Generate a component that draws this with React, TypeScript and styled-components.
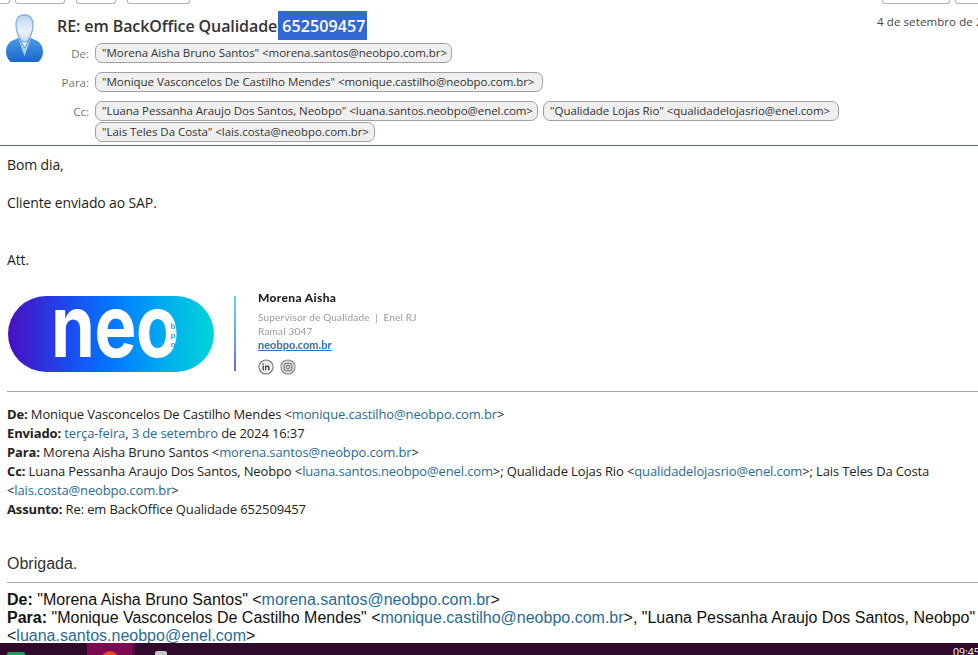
import React from "react";
import styled, { createGlobalStyle } from "styled-components";

const GlobalStyle = createGlobalStyle`
  html, body {
    margin: 0;
    padding: 0;
    background: #ffffff;
    overflow: hidden;
  }
`;

const Page = styled.div`
  width: 978px;
  height: 655px;
  display: flex;
  flex-direction: column;
  overflow: hidden;
  font-family: "Open Sans", "Noto Sans", sans-serif;
  color: #222;
`;

const Toolbar = styled.div`
  height: 4px;
  display: flex;
  justify-content: space-between;
  flex: none;
`;

const ToolGroup = styled.div<{ $left?: number; $right?: number }>`
  display: flex;
  margin-left: ${(p) => p.$left ?? 0}px;
  margin-right: ${(p) => p.$right ?? 0}px;
`;

const ToolButton = styled.div<{ $w: number; $gap: number }>`
  width: ${(p) => p.$w}px;
  margin-right: ${(p) => p.$gap}px;
  height: 4px;
  box-sizing: border-box;
  border: 1px solid #b5b5b5;
  border-top: none;
  border-radius: 0 0 3px 3px;
`;

const Header = styled.div`
  height: 142px;
  box-sizing: border-box;
  border-bottom: 1px solid #5f6f7d;
  display: flex;
  flex: none;
  position: relative;
`;

const AvatarCol = styled.div`
  width: 53px;
  flex: none;
  padding: 10px 0 0 5px;
  box-sizing: border-box;
`;

const HeaderMain = styled.div`
  flex: 1;
  display: flex;
  flex-direction: column;
`;

const Subject = styled.div`
  height: 32px;
  display: flex;
  align-items: flex-start;
  font-size: 16px;
  font-weight: 600;
  color: #333;
  letter-spacing: -0.09px;
  line-height: 31px;
  margin: 7px 0 0 4px;
  white-space: pre;
`;

const Selected = styled.span`
  background: #3367d1;
  color: #fff;
  padding-left: 4px;
  width: 89px;
  height: 29px;
  margin-left: 1px;
  box-sizing: border-box;
  letter-spacing: 0.1px;
  overflow: hidden;
`;

const DateText = styled.div`
  position: absolute;
  left: 877px;
  top: 10px;
  font-size: 11.5px;
  letter-spacing: 0.1px;
  line-height: 16px;
  color: #444;
  white-space: nowrap;
`;

const Row = styled.div<{ $mb: number }>`
  display: flex;
  margin-bottom: ${(p) => p.$mb}px;
`;

const RowLabel = styled.div`
  width: 36px;
  flex: none;
  text-align: right;
  font-size: 11.5px;
  line-height: 21px;
  color: #777;
  margin-right: 6px;
`;

const Chips = styled.div`
  display: flex;
  flex-wrap: wrap;
  gap: 1px 5px;
  width: 800px;
`;

const Chip = styled.div<{ $w: number }>`
  width: ${(p) => p.$w}px;
  height: 20px;
  box-sizing: border-box;
  border: 1px solid #a0a0a0;
  border-radius: 7px;
  background: #efefef;
  font-size: 11.5px;
  line-height: 18px;
  padding-left: 6px;
  color: #333;
  white-space: nowrap;
  overflow: hidden;
  letter-spacing: -0.05px;
`;

const Body = styled.div`
  flex: 1;
  padding: 0 0 0 7px;
  overflow: hidden;
`;

const Para = styled.p<{ $top: number }>`
  margin: ${(p) => p.$top}px 0 0;
  font-size: 14px;
  line-height: 19px;
  color: #1d1d1d;
  letter-spacing: -0.13px;
`;

const Signature = styled.div`
  display: flex;
  margin: 27px 0 0 1px;
  height: 80px;
  align-items: flex-start;
`;

const Logo = styled.div`
  width: 206px;
  height: 76px;
  border-radius: 38px;
  background: linear-gradient(90deg, #4a0fc0 0%, #1a4cf0 30%, #0080ff 55%, #00b0ec 78%, #00d4d8 100%);
  flex: none;
  position: relative;
  filter: blur(0.4px);
`;

const LogoWord = styled.span`
  display: block;
  width: 155px;
  font-family: "Inter", sans-serif;
  font-size: 86px;
  font-weight: 700;
  line-height: 60px;
  color: #fff;
  letter-spacing: -0.5px;
  transform: scaleX(0.82);
  transform-origin: 0 50%;
  padding: 0 0 0 0;
  position: absolute;
  left: 43px;
  top: 0;
`;

const LogoSub = styled.span`
  position: absolute;
  left: 161px;
  top: 25px;
  writing-mode: vertical-rl;
  text-orientation: upright;
  font-family: "Lato", sans-serif;
  font-size: 8px;
  line-height: 8px;
  letter-spacing: -1px;
  color: #1a9cee;
  font-weight: 700;
`;

const SigDivider = styled.div`
  width: 2px;
  height: 75px;
  margin-left: 20px;
  background: linear-gradient(180deg, #5fdce6 0%, #5fa8f0 55%, #7a5fe0 100%);
  flex: none;
`;

const SigText = styled.div`
  margin-left: 22px;
  font-family: "Lato", sans-serif;
  filter: blur(0.4px);
`;

const SigName = styled.div`
  font-size: 12px;
  font-weight: 900;
  line-height: 12px;
  letter-spacing: 0.35px;
  color: #222;
  margin-top: -4px;
`;

const SigLine = styled.div<{ $top?: number }>`
  font-size: 10px;
  letter-spacing: 0.2px;
  line-height: 14px;
  color: #9a9a9a;
  white-space: pre;
  margin-top: ${(p) => p.$top ?? 0}px;
`;

const SigLink = styled.div`
  font-size: 11px;
  font-weight: 700;
  line-height: 12px;
  color: #2f6fc0;
  text-decoration: underline;
  margin-top: 1px;
`;

const SigIcons = styled.div`
  display: flex;
  gap: 6px;
  margin-top: 8px;
`;

const Rule = styled.hr<{ $top: number }>`
  border: none;
  height: 1px;
  background: #a9a9a9;
  margin: ${(p) => p.$top}px 0 0;
`;

const Meta = styled.div`
  margin-top: 13px;
  font-size: 13px;
  line-height: 19px;
  color: #222;
  letter-spacing: -0.13px;
  width: 945px;
`;

const Link = styled.span`
  color: #2a6a96;
`;

const Bold = styled.b`
  font-weight: 700;
`;

const Thanks = styled.div`
  margin-top: 36px;
  font-family: "Liberation Sans", Arial, sans-serif;
  font-size: 16px;
  line-height: 18px;
  color: #333;
`;

const Quoted = styled.div`
  margin-top: 8px;
  font-family: "Liberation Sans", Arial, sans-serif;
  font-size: 16px;
  line-height: 18px;
  color: #111;
  white-space: nowrap;
`;

const Taskbar = styled.div`
  height: 12px;
  flex: none;
  background: #2f0a2b;
  display: flex;
  align-items: flex-end;
  position: relative;
  overflow: hidden;
`;

const TaskIcon = styled.div<{ $left: number; $w: number; $h: number; $color: string }>`
  margin-left: ${(p) => p.$left}px;
  width: ${(p) => p.$w}px;
  height: ${(p) => p.$h}px;
  background: ${(p) => p.$color};
  border-radius: 2px 2px 0 0;
  flex: none;
`;

const ActiveTile = styled.div`
  margin-left: 62px;
  width: 45px;
  height: 12px;
  flex: none;
  background: #7d0a52;
  border-right: 3px solid #5e0a45;
  display: flex;
  justify-content: center;
  overflow: hidden;
`;

const TileDot = styled.div`
  width: 18px;
  height: 18px;
  margin-top: 8px;
  border-radius: 50%;
  background: #e8452f;
  flex: none;
`;

const Clock = styled.div`
  position: absolute;
  left: 953px;
  top: 3px;
  font-family: "Open Sans", sans-serif;
  font-size: 10.5px;
  line-height: 12px;
  color: #fff;
`;

const Avatar = () => (
  <svg width="39" height="49" viewBox="0 0 39 49">
    <defs>
      <linearGradient id="head" x1="0" y1="0" x2="0" y2="1">
        <stop offset="0" stopColor="#bcd5ee" />
        <stop offset="0.6" stopColor="#eaf2fa" />
        <stop offset="1" stopColor="#c4d9ee" />
      </linearGradient>
      <linearGradient id="suit" x1="0" y1="0" x2="0" y2="1">
        <stop offset="0" stopColor="#4a9aea" />
        <stop offset="1" stopColor="#1a68c6" />
      </linearGradient>
    </defs>
    <path d="M1 38c0-7 4-11 9-12.500l3-1.500h13l3 1.500c5 1.500 9 5.500 9 12.500 0 4-2 8-5 10H6c-3-2-5-6-5-10z" fill="url(#suit)" />
    <path d="M13 24l6.500 18L26 24l-6.500 10z" fill="#a6d0f4" />
    <path d="M14.500 24l5 9 5-9z" fill="#f4f8fc" />
    <path d="M20.500 1c-6 0-8.500 4-8.500 10 0 7 4 17 8.500 17s8.500-10 8.500-17c0-6-2.500-10-8.500-10z" transform="translate(-1 0)" fill="url(#head)" stroke="#86b2dc" strokeWidth="1.300" />
  </svg>
);

const LinkedIn = () => (
  <svg width="16" height="16" viewBox="0 0 17 17">
    <circle cx="8.500" cy="8.500" r="7.500" fill="#f3f3f3" stroke="#777" strokeWidth="1.200" />
    <rect x="4.800" y="7" width="1.500" height="5" fill="#444" />
    <circle cx="5.500" cy="5.300" r="0.900" fill="#444" />
    <path d="M7.500 7h1.400v.8c.6-1.200 3.400-1.300 3.400 1.200v3h-1.500V9.500c0-1.300-2-1.300-2 0V12H7.500z" fill="#444" />
  </svg>
);

const Instagram = () => (
  <svg width="16" height="16" viewBox="0 0 17 17">
    <circle cx="8.500" cy="8.500" r="7.500" fill="#ddd" stroke="#888" strokeWidth="1.200" />
    <rect x="4.500" y="4.500" width="8" height="8" rx="2.200" fill="none" stroke="#666" strokeWidth="1" />
    <circle cx="8.500" cy="8.500" r="1.900" fill="none" stroke="#666" strokeWidth="1" />
  </svg>
);

export default function App() {
  return (
    <Page>
      <GlobalStyle />
      <Toolbar>
        <ToolGroup $left={-30}>
          <ToolButton $w={40} $gap={5} />
          <ToolButton $w={50} $gap={11} />
          <ToolButton $w={40} $gap={11} />
          <ToolButton $w={63} $gap={0} />
        </ToolGroup>
        <ToolGroup $right={-7}>
          <ToolButton $w={68} $gap={5} />
          <ToolButton $w={30} $gap={0} />
        </ToolGroup>
      </Toolbar>
      <Header>
        <AvatarCol>
          <Avatar />
        </AvatarCol>
        <HeaderMain>
          <Subject>
            RE: em BackOffice Qualidade<Selected>652509457</Selected>
          </Subject>
          <Row $mb={8}>
            <RowLabel>De:</RowLabel>
            <Chips>
              <Chip $w={357}>"Morena Aisha Bruno Santos" &lt;morena.santos@neobpo.com.br&gt;</Chip>
            </Chips>
          </Row>
          <Row $mb={8}>
            <RowLabel>Para:</RowLabel>
            <Chips>
              <Chip $w={448}>"Monique Vasconcelos De Castilho Mendes" &lt;monique.castilho@neobpo.com.br&gt;</Chip>
            </Chips>
          </Row>
          <Row $mb={0}>
            <RowLabel>Cc:</RowLabel>
            <Chips>
              <Chip $w={443}>"Luana Pessanha Araujo Dos Santos, Neobpo" &lt;luana.santos.neobpo@enel.com&gt;</Chip>
              <Chip $w={296}>"Qualidade Lojas Rio" &lt;qualidadelojasrio@enel.com&gt;</Chip>
              <Chip $w={280}>"Lais Teles Da Costa" &lt;lais.costa@neobpo.com.br&gt;</Chip>
            </Chips>
          </Row>
        </HeaderMain>
        <DateText>4 de setembro de 2024</DateText>
      </Header>
      <Body>
        <Para $top={9}>Bom dia,</Para>
        <Para $top={19}>Cliente enviado ao SAP.</Para>
        <Para $top={38}>Att.</Para>
        <Signature>
          <Logo>
            <LogoWord>neo</LogoWord>
            <LogoSub>bpo</LogoSub>
          </Logo>
          <SigDivider />
          <SigText>
            <SigName>Morena Aisha</SigName>
            <SigLine $top={6}>Supervisor de Qualidade  |  Enel RJ</SigLine>
            <SigLine>Ramal 3047</SigLine>
            <SigLink>neobpo.com.br</SigLink>
            <SigIcons>
              <LinkedIn />
              <Instagram />
            </SigIcons>
          </SigText>
        </Signature>
        <Rule $top={15} />
        <Meta>
          <div><Bold>De:</Bold> Monique Vasconcelos De Castilho Mendes &lt;<Link>monique.castilho@neobpo.com.br</Link>&gt;</div>
          <div><Bold>Enviado:</Bold> <Link>terça-feira</Link>, <Link>3 de setembro</Link> de 2024 16:37</div>
          <div><Bold>Para:</Bold> Morena Aisha Bruno Santos &lt;<Link>morena.santos@neobpo.com.br</Link>&gt;</div>
          <div><Bold>Cc:</Bold> Luana Pessanha Araujo Dos Santos, Neobpo &lt;<Link>luana.santos.neobpo@enel.com</Link>&gt;; Qualidade Lojas Rio &lt;<Link>qualidadelojasrio@enel.com</Link>&gt;; Lais Teles Da Costa &lt;<Link>lais.costa@neobpo.com.br</Link>&gt;</div>
          <div><Bold>Assunto:</Bold> Re: em BackOffice Qualidade 652509457</div>
        </Meta>
        <Thanks>Obrigada.</Thanks>
        <Rule $top={9} />
        <Quoted>
          <div><Bold>De:</Bold> "Morena Aisha Bruno Santos" &lt;<Link>morena.santos@neobpo.com.br</Link>&gt;</div>
          <div><Bold>Para:</Bold> "Monique Vasconcelos De Castilho Mendes" &lt;<Link>monique.castilho@neobpo.com.br</Link>&gt;, "Luana Pessanha Araujo Dos Santos, Neobpo"</div>
          <div>&lt;<Link>luana.santos.neobpo@enel.com</Link>&gt;</div>
        </Quoted>
      </Body>
      <Taskbar>
        <TaskIcon $left={7} $w={18} $h={3} $color="#1d9d62" />
        <ActiveTile>
          <TileDot />
        </ActiveTile>
        <TaskIcon $left={20} $w={12} $h={4} $color="#c4c4c4" />
        <Clock>09:45</Clock>
      </Taskbar>
    </Page>
  );
}
